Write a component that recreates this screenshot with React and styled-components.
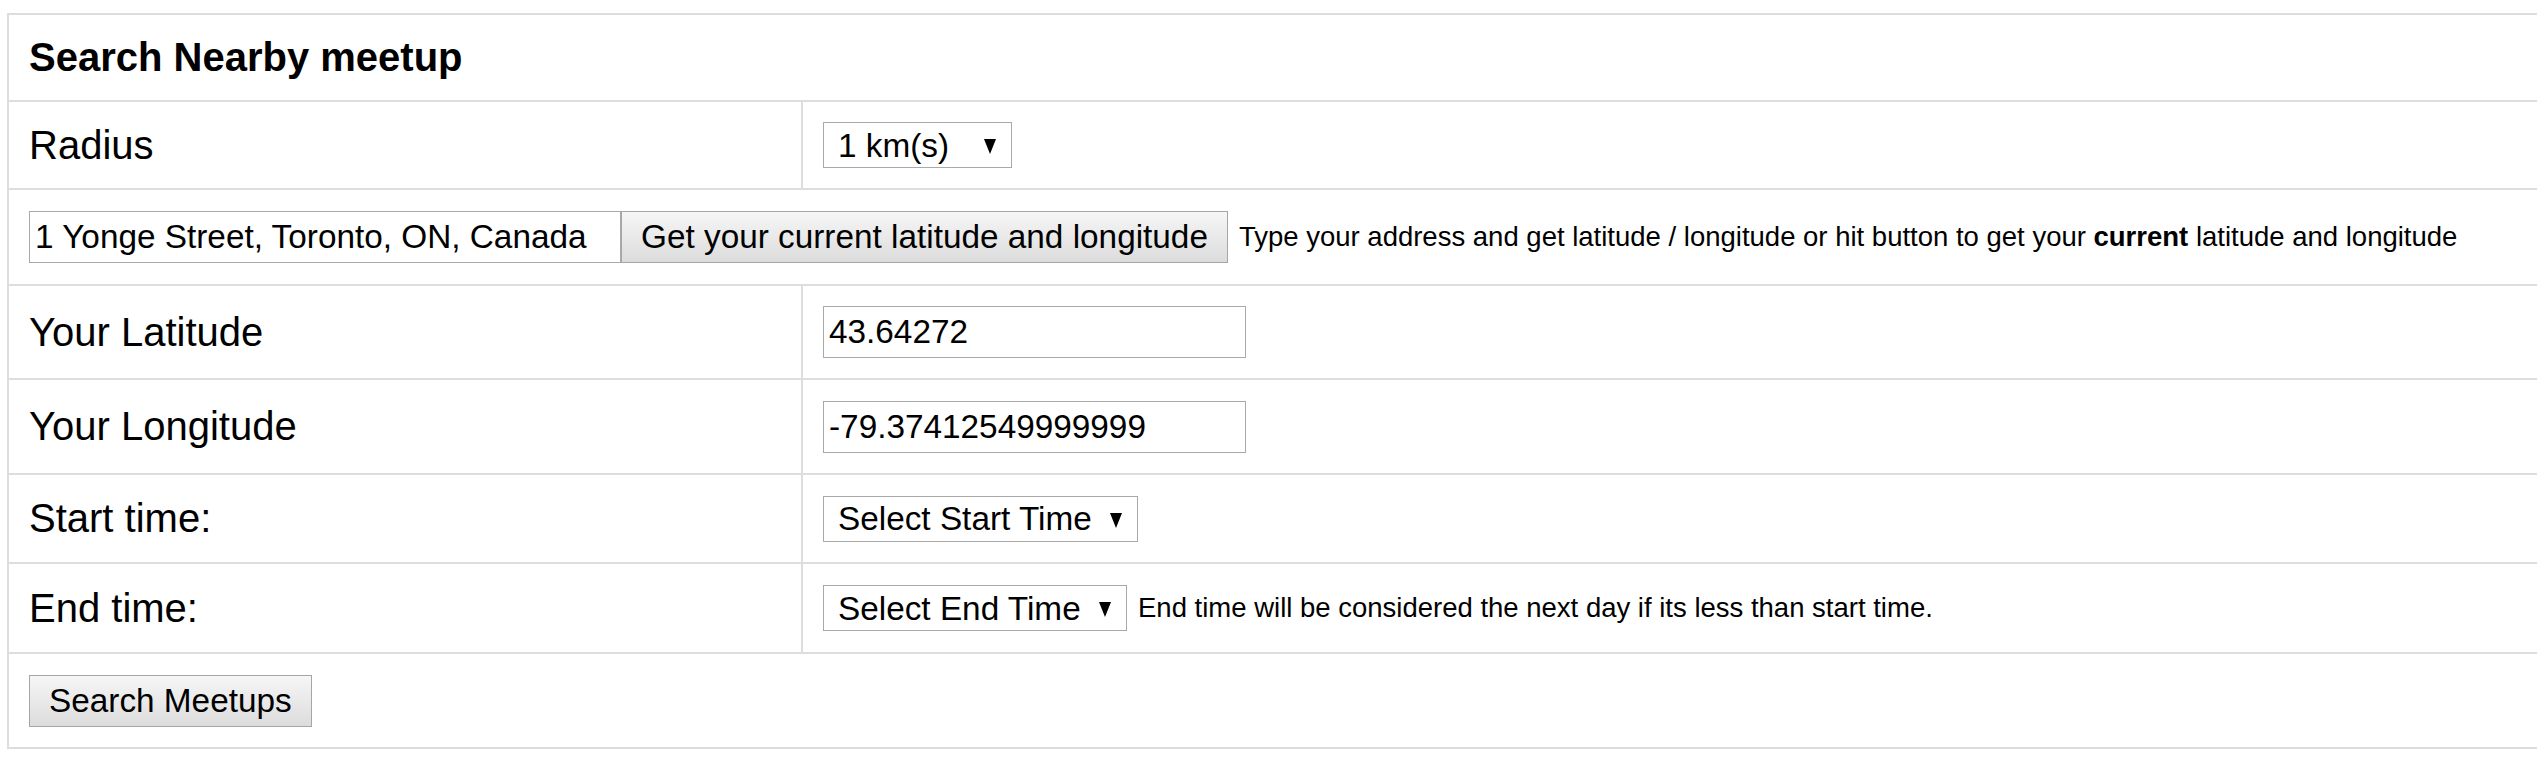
import styled, { createGlobalStyle } from "styled-components";

const GlobalStyle = createGlobalStyle`
  html, body {
    margin: 0;
    padding: 0;
    overflow: hidden;
    background: #fff;
  }
  body {
    font-family: "Liberation Sans", Arial, sans-serif;
    color: #000;
  }
`;

const Panel = styled.form`
  display: grid;
  grid-template-columns: 794px 1fr;
  width: 2560px;
  margin: 13px 0 0 7px;
  border-top: 2px solid #ddd;
  border-left: 2px solid #ddd;
`;

const Cell = styled.div`
  display: flex;
  align-items: center;
  box-sizing: border-box;
  height: ${(p) => p.$h}px;
  padding: 0 20px;
  border-bottom: 2px solid #ddd;
  grid-column: ${(p) => (p.$wide ? "1 / -1" : "auto")};
  border-right: ${(p) => (p.$label ? "2px solid #ddd" : "none")};
`;

const Title = styled.h1`
  margin: 0;
  font-size: 40px;
  font-weight: 700;
`;

const Label = styled.span`
  font-size: 40px;
`;

const TextInput = styled.input`
  box-sizing: border-box;
  width: ${(p) => p.$w}px;
  height: 52px;
  padding: 0 5px;
  font-family: "Liberation Sans", Arial, sans-serif;
  font-size: 33.33px;
  color: #000;
  background: #fff;
  border: 1px solid #a9a9a9;
  border-radius: 0;
  outline: none;
`;

const ActionButton = styled.button`
  box-sizing: border-box;
  height: 52px;
  padding: 0 19px;
  font-family: "Liberation Sans", Arial, sans-serif;
  font-size: 33.33px;
  color: #000;
  background: linear-gradient(to bottom, #f6f6f6, #dcdcdc);
  border: 1px solid #a6a6a6;
  border-radius: 0;
  cursor: pointer;
`;

const Help = styled.span`
  margin-left: 11px;
  font-size: 27.5px;

  b {
    font-weight: 700;
  }
`;

const SelectBox = styled.span`
  position: relative;
  display: inline-flex;
`;

const Select = styled.select`
  appearance: none;
  box-sizing: border-box;
  width: ${(p) => p.$w}px;
  height: 46px;
  padding: 0 0 0 14px;
  font-family: "Liberation Sans", Arial, sans-serif;
  font-size: 33.33px;
  color: #000;
  background: #fff;
  border: 1px solid #a9a9a9;
  border-radius: 0;
  outline: none;
`;

const Arrow = styled.span`
  position: absolute;
  right: 16px;
  top: 17px;
  width: 0;
  height: 0;
  border-left: 6px solid transparent;
  border-right: 6px solid transparent;
  border-top: 15px solid #000;
  pointer-events: none;
`;

const Dropdown = ({ width, options }) => (
  <SelectBox>
    <Select $w={width}>
      {options.map((o) => (
        <option key={o}>{o}</option>
      ))}
    </Select>
    <Arrow />
  </SelectBox>
);

const App = () => {
  return (
    <>
      <GlobalStyle />
      <Panel onSubmit={(e) => e.preventDefault()}>
        <Cell $wide $h={87}>
          <Title>Search Nearby meetup</Title>
        </Cell>

        <Cell $label $h={88}>
          <Label>Radius</Label>
        </Cell>
        <Cell $h={88}>
          <Dropdown width={189} options={["1 km(s)", "5 km(s)", "10 km(s)"]} />
        </Cell>

        <Cell $wide $h={96}>
          <TextInput $w={592} defaultValue="1 Yonge Street, Toronto, ON, Canada" />
          <ActionButton type="button">Get your current latitude and longitude</ActionButton>
          <Help>
            Type your address and get latitude / longitude or hit button to get your{" "}
            <b>current</b> latitude and longitude
          </Help>
        </Cell>

        <Cell $label $h={94}>
          <Label>Your Latitude</Label>
        </Cell>
        <Cell $h={94}>
          <TextInput $w={423} defaultValue="43.64272" />
        </Cell>

        <Cell $label $h={95}>
          <Label>Your Longitude</Label>
        </Cell>
        <Cell $h={95}>
          <TextInput $w={423} defaultValue="-79.37412549999999" />
        </Cell>

        <Cell $label $h={89}>
          <Label>Start time:</Label>
        </Cell>
        <Cell $h={89}>
          <Dropdown width={315} options={["Select Start Time"]} />
        </Cell>

        <Cell $label $h={90}>
          <Label>End time:</Label>
        </Cell>
        <Cell $h={90}>
          <Dropdown width={304} options={["Select End Time"]} />
          <Help>End time will be considered the next day if its less than start time.</Help>
        </Cell>

        <Cell $wide $h={95}>
          <ActionButton type="submit">Search Meetups</ActionButton>
        </Cell>
      </Panel>
    </>
  );
};

export default App;
